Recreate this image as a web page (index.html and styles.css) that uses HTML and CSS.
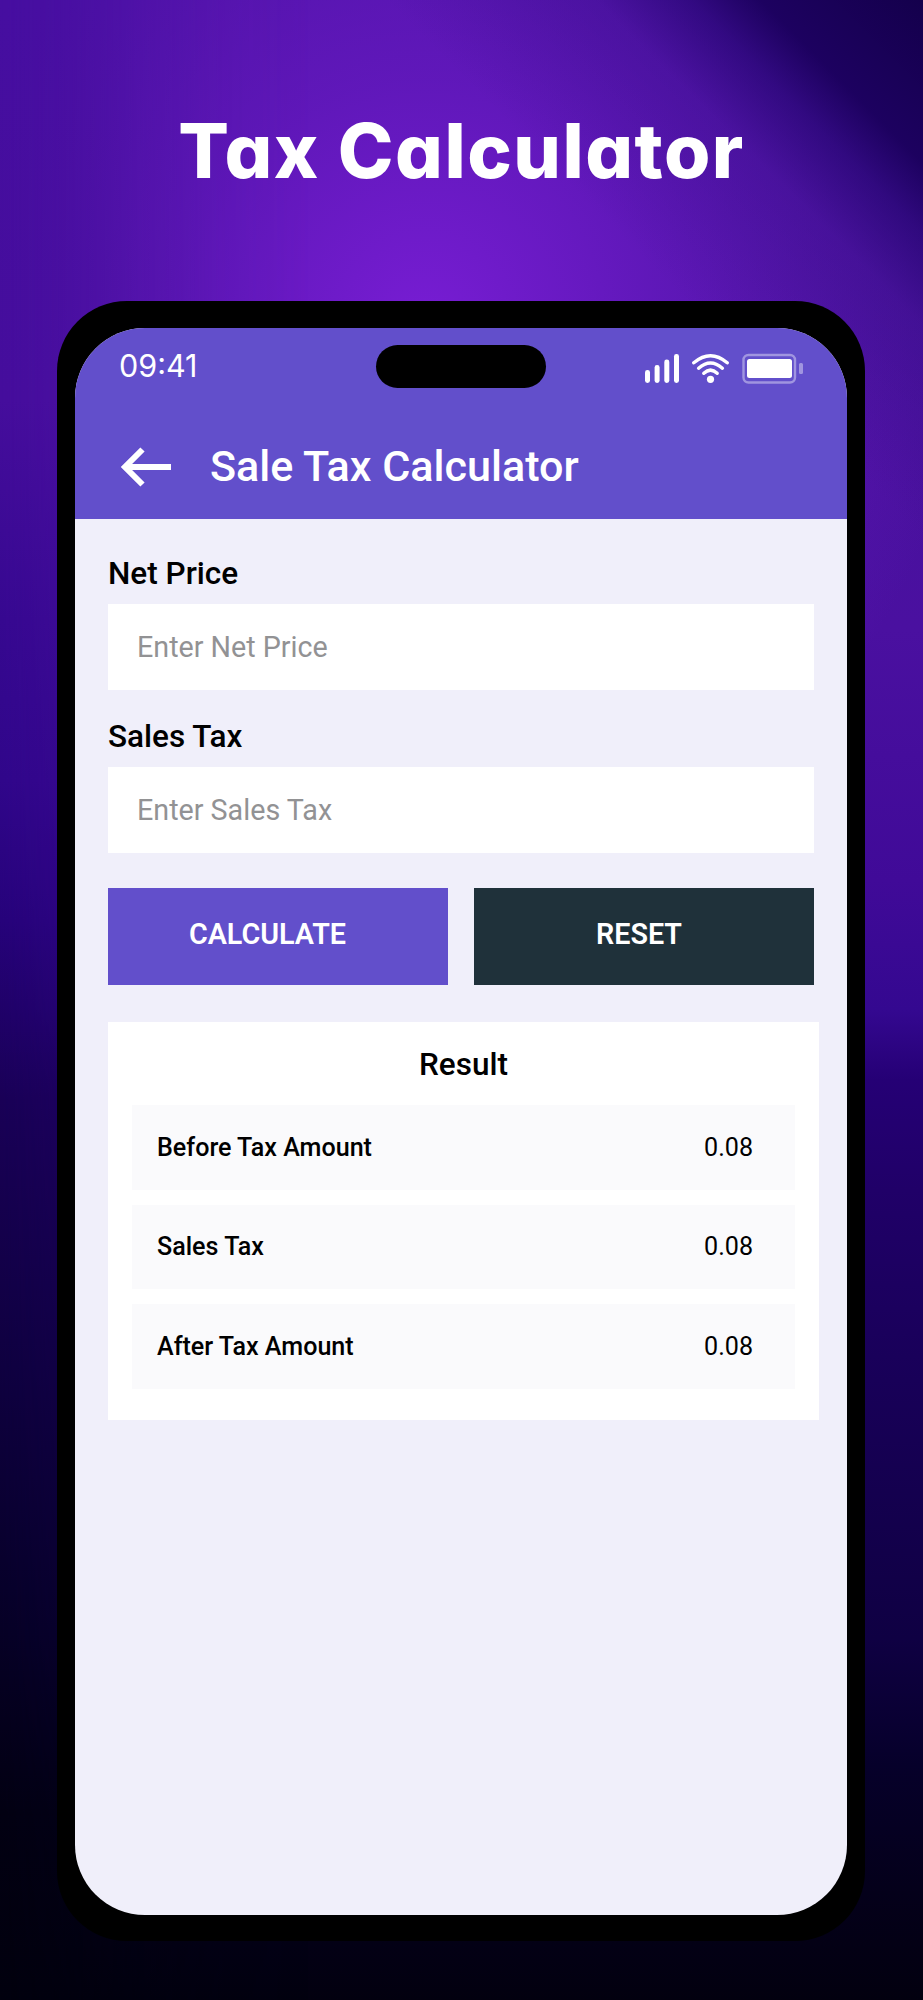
FILE: index.html
```html
<!DOCTYPE html>
<html lang="en">
<head>
<meta charset="utf-8">
<title>Tax Calculator</title>
<link rel="stylesheet" href="styles.css">
</head>
<body>
<main class="promo">
  <h1 class="promo-title">Tax Calculator</h1>
  <div class="phone">
    <div class="screen">
      <header class="top">
        <div class="status">
          <span class="time">09:41</span>
          <span class="island"></span>
          <svg class="indicators" width="160" height="32" viewBox="0 0 160 32">
            <g fill="#fff">
              <rect x="0" y="17" width="5" height="13" rx="2.4"/>
              <rect x="9.6" y="12" width="5" height="18" rx="2.4"/>
              <rect x="19.3" y="6.6" width="5" height="23.4" rx="2.4"/>
              <rect x="29" y="1" width="5" height="29" rx="2.4"/>
              <circle cx="65.5" cy="26.3" r="3.6"/>
            </g>
            <g fill="none" stroke="#fff" stroke-width="3.4" stroke-linecap="round">
              <path d="M48.8 9.8Q65.5-4.2 82.2 9.8"/>
              <path d="M53.6 15.2Q65.5 4.8 77.4 15.2"/>
              <path d="M58.8 20.3Q65.5 14 72.2 20.3"/>
            </g>
            <rect x="98.5" y="2" width="51.5" height="27.5" rx="5" fill="none" stroke="#fff" stroke-opacity=".4" stroke-width="2.4"/>
            <rect x="102" y="6" width="45" height="19" rx="2.5" fill="#fff"/>
            <rect x="154" y="10" width="4" height="11" rx="1.5" fill="#fff" fill-opacity=".4"/>
          </svg>
        </div>
        <div class="nav">
          <svg class="back" width="52" height="42" viewBox="0 0 52 42" fill="none" stroke="#fff" stroke-width="6"><path d="M22.5 3.5 5 21 22.5 38.5M4 21H51"/></svg>
          <h2 class="nav-title">Sale Tax Calculator</h2>
        </div>
      </header>
      <form class="form">
        <label class="label" for="net">Net Price</label>
        <input class="input" id="net" placeholder="Enter Net Price">
        <label class="label" for="tax">Sales Tax</label>
        <input class="input" id="tax" placeholder="Enter Sales Tax">
        <div class="actions">
          <button class="btn btn-primary" type="button">CALCULATE</button>
          <button class="btn btn-dark" type="button">RESET</button>
        </div>
      </form>
      <section class="result">
        <h3 class="result-title">Result</h3>
        <div class="row"><span class="name">Before Tax Amount</span><span>0.08</span></div>
        <div class="row"><span class="name">Sales Tax</span><span>0.08</span></div>
        <div class="row"><span class="name">After Tax Amount</span><span>0.08</span></div>
      </section>
    </div>
  </div>
</main>
</body>
</html>
```
FILE: styles.css
```css
* { box-sizing: border-box; }
body { margin: 0; font-family: Roboto, "Liberation Sans", sans-serif; }
.promo {
  position: relative;
  z-index: 0;
  width: 923px;
  height: 2000px;
  overflow: hidden;
  background:
    linear-gradient(225deg, #14004c 0, rgba(26, 0, 92, .95) 115px, rgba(36, 5, 112, .7) 165px, rgba(50, 12, 130, .35) 230px, rgba(60, 15, 140, 0) 380px),
    radial-gradient(ellipse 540px 560px at 46% 330px, #781dd4 0, rgba(104, 26, 196, .7) 45%, rgba(80, 20, 165, 0) 100%),
    linear-gradient(180deg, #4d12a4 0, #48129b 280px, #4a10a0 630px, #400a98 880px, #340890 1010px, #250075 1080px, #200068 1190px, #180058 1380px, #0f0043 1638px, #06002a 1765px, #04001a 1893px, #02000f 2000px);
}
/* Left side falls to near black earlier than the right */
.promo::before {
  content: "";
  position: absolute;
  z-index: -1;
  inset: 0 auto 0 0;
  width: 320px;
  background: linear-gradient(180deg, #460ea0 0, #450d9c 400px, #360890 620px, #30068a 780px, #26027a 920px, #190056 1100px, #0f0040 1366px, #07002a 1589px, #020012 1812px, #01000e 2000px);
  -webkit-mask-image: linear-gradient(90deg, #000 0, rgba(0, 0, 0, .8) 60px, rgba(0, 0, 0, .35) 140px, rgba(0, 0, 0, .1) 220px, transparent 310px);
  mask-image: linear-gradient(90deg, #000 0, rgba(0, 0, 0, .8) 60px, rgba(0, 0, 0, .35) 140px, rgba(0, 0, 0, .1) 220px, transparent 310px);
}
.promo-title {
  margin: 0;
  height: 301px;
  padding-top: 106px;
  color: #fff;
  font: 800 75px/90px Inter, "Open Sans", sans-serif;
  font-feature-settings: "cv11";
  letter-spacing: 1.5px;
  text-align: center;
  white-space: nowrap;
}
.phone {
  width: 808px;
  height: 1640px;
  margin-left: 57px;
  padding: 27px 18px 26px;
  background: #000;
  border-radius: 70px;
}
.screen { height: 1587px; background: #f0effa; border-radius: 70px; overflow: hidden; }
.top { height: 191px; background: #624fcb; color: #fff; }
.status { display: grid; grid-template-columns: 301px 170px 1fr; height: 94px; padding-top: 17px; align-items: start; }
.time { padding: 2px 0 0 44px; font: 400 30.5px/38px Inter, sans-serif; }
.island { height: 43px; border-radius: 22px; background: #000; }
.indicators { margin: 8px 0 0 99px; }
.nav { display: flex; align-items: center; gap: 38px; height: 89px; padding-left: 45px; }
.nav-title { margin: 0; font-size: 43.1px; font-weight: 500; line-height: 50px; }
.form { display: flex; flex-direction: column; padding: 34px 33px 0; }
.label { font-size: 31.5px; font-weight: 500; line-height: 42px; margin-bottom: 9px; color: #000; }
.input { height: 86px; margin: 0 0 26px; padding: 0 29px; border: 0; border-radius: 0; background: #fff; font: 400 28.7px Roboto, sans-serif; }
.input::placeholder { color: #929294; opacity: 1; }
.actions { display: grid; grid-template-columns: 1fr 1fr; gap: 26px; padding-top: 9px; }
.btn { height: 97px; border: 0; padding: 0 0 5px; color: #fff; font: 600 28.7px Roboto, sans-serif; }
.btn-primary { background: #624fcb; padding-right: 21px; }
.btn-dark { background: #1f313a; padding-right: 10px; }
.result { display: flex; flex-direction: column; gap: 15px; width: 711px; height: 398px; margin: 37px 0 0 33px; padding: 22px 24px; background: #fff; color: #000; }
.result-title { margin: 0 0 4px; font-size: 31.5px; font-weight: 500; line-height: 42px; text-align: center; }
.row { display: flex; justify-content: space-between; align-items: center; height: 84.5px; padding: 0 42px 0 25px; background: #fafafc; font-size: 25.1px; }
.name { font-weight: 500; }
```
